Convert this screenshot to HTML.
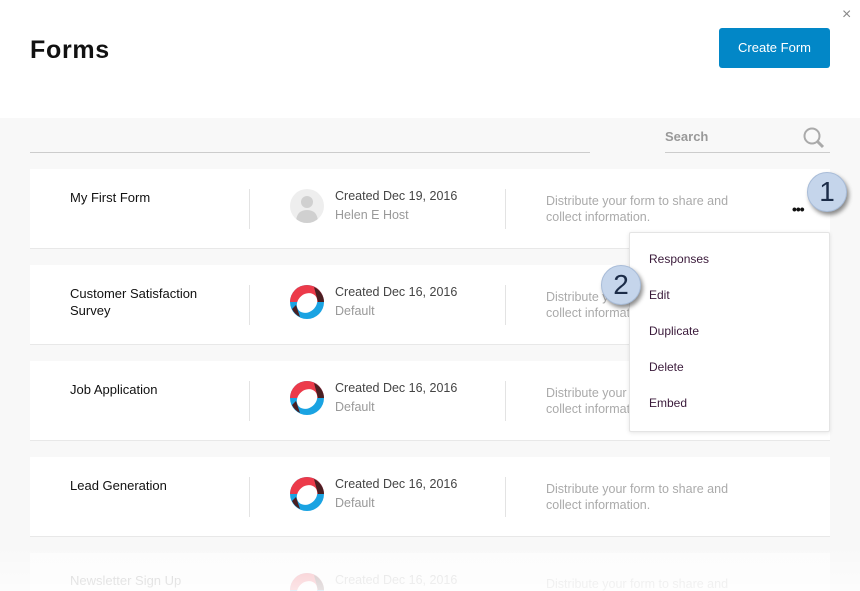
<!DOCTYPE html>
<html style="width:860px;height:591px;overflow:hidden"><head><style>
*{margin:0;padding:0;box-sizing:border-box}
body{width:860px;height:591px;background:#fff;font-family:"Liberation Sans",sans-serif;position:relative;overflow:hidden}
.a{position:absolute}
.gray{left:0;top:118px;width:860px;height:473px;background:#f8f8f8}
.card{left:30px;width:800px;height:80px;background:#fff;border-bottom:1px solid #e8e8e8}
.t{font-size:13px;color:#111;line-height:17px}
.c{font-size:12.5px;color:#444;line-height:19px}
.s{font-size:12.5px;color:#999;line-height:19px}
.d{font-size:12.5px;color:#aaa;line-height:16px}
.v{width:1px;height:40px;background:#e3e3e3}
.m{font-size:12px;color:#3a1a3a;left:649px}
.badge{width:40px;height:40px;border-radius:50%;background:#c5d5eb;border:1px solid #a8bcd8;box-shadow:2px 3px 4px rgba(0,0,0,.45);font-size:28px;color:#1c2c48;text-align:center;line-height:38px}
</style></head><body>
<div class="a" style="left:30px;top:36px;font-size:25px;font-weight:bold;color:#111;letter-spacing:.7px">Forms</div>
<div class="a" style="left:842px;top:6px;font-size:16px;color:#888">×</div>
<div class="a" style="left:719px;top:28px;width:111px;height:40px;background:#0287c7;border-radius:3px;color:#fff;font-size:13px;text-align:center;line-height:40px">Create Form</div>
<div class="a gray"></div>
<div class="a" style="left:30px;top:152px;width:560px;height:1px;background:#ccc"></div>
<div class="a" style="left:665px;top:129px;font-size:13px;color:#999;font-weight:bold">Search</div>
<svg class="a" style="left:802px;top:126px" width="24" height="24"><circle cx="10" cy="10" r="7.5" fill="none" stroke="#aaa" stroke-width="2"/><line x1="15.5" y1="15.5" x2="21" y2="21" stroke="#aaa" stroke-width="3"/></svg>
<div class="a" style="left:665px;top:152px;width:165px;height:1px;background:#ccc"></div>

<div class="a card" style="top:169px"></div>
<div class="a card" style="top:265px"></div>
<div class="a card" style="top:361px"></div>
<div class="a card" style="top:457px"></div>
<div class="a card" style="top:553px;height:38px;border:none;opacity:.5"></div>

<div class="a t" style="left:70px;top:189px">My First Form</div>
<div class="a v" style="left:249px;top:189px"></div>
<div class="a" style="left:290px;top:189px;width:34px;height:34px;border-radius:50%;background:#eee;overflow:hidden"><svg width="34" height="34"><circle cx="17" cy="13" r="6" fill="#d0d0d0"/><path d="M6 34 Q6 21 17 21 Q28 21 28 34Z" fill="#d0d0d0"/></svg></div>
<div class="a c" style="left:335px;top:187px">Created Dec 19, 2016</div>
<div class="a s" style="left:335px;top:206px">Helen E Host</div>
<div class="a v" style="left:505px;top:189px"></div>
<div class="a d" style="left:546px;top:193px">Distribute your form to share and<br>collect information.</div>
<div class="a" style="left:792px;top:202px;font-size:14px;font-weight:bold;color:#111;letter-spacing:-1px;line-height:14px">•••</div>

<div class="a t" style="left:70px;top:285px">Customer Satisfaction<br>Survey</div>
<div class="a t" style="left:70px;top:381px">Job Application</div>
<div class="a t" style="left:70px;top:477px">Lead Generation</div>
<div class="a" style="left:70px;top:573px;font-size:13px;color:#ccc">Newsletter Sign Up</div>

<div class="a v" style="left:249px;top:285px"></div><div class="a v" style="left:505px;top:285px"></div>
<div class="a v" style="left:249px;top:381px"></div><div class="a v" style="left:505px;top:381px"></div>
<div class="a v" style="left:249px;top:477px"></div><div class="a v" style="left:505px;top:477px"></div>

<svg width="0" height="0" style="position:absolute"><defs><g id="lg"><circle cx="17" cy="17" r="17" fill="#1aa3e2"/><path d="M17 0 A17 17 0 0 0 0 17 L34 17 A17 17 0 0 0 17 0Z" fill="#ec3a4a"/><path d="M24 2 A17 17 0 0 1 34 17 L28 17Z" fill="#4a1f22"/><path d="M2 24 A17 17 0 0 0 10 32 L6 20Z" fill="#4a1f22"/><ellipse cx="17" cy="18" rx="11" ry="9" transform="rotate(-40 17 18)" fill="#fff"/></g></defs></svg>
<svg class="a" style="left:290px;top:285px" width="34" height="34"><use href="#lg"/></svg>
<svg class="a" style="left:290px;top:381px" width="34" height="34"><use href="#lg"/></svg>
<svg class="a" style="left:290px;top:477px" width="34" height="34"><use href="#lg"/></svg>
<svg class="a" style="left:290px;top:573px;opacity:.3" width="34" height="34"><use href="#lg"/></svg>

<div class="a c" style="left:335px;top:283px">Created Dec 16, 2016</div><div class="a s" style="left:335px;top:302px">Default</div>
<div class="a c" style="left:335px;top:379px">Created Dec 16, 2016</div><div class="a s" style="left:335px;top:398px">Default</div>
<div class="a c" style="left:335px;top:475px">Created Dec 16, 2016</div><div class="a s" style="left:335px;top:494px">Default</div>
<div class="a" style="left:335px;top:573px;font-size:12.5px;color:#ddd">Created Dec 16, 2016</div>

<div class="a d" style="left:546px;top:289px">Distribute your form to share and<br>collect information.</div>
<div class="a d" style="left:546px;top:385px">Distribute your form to share and<br>collect information.</div>
<div class="a d" style="left:546px;top:481px">Distribute your form to share and<br>collect information.</div>
<div class="a" style="left:546px;top:577px;font-size:12.5px;color:#e2e2e2">Distribute your form to share and</div>

<div class="a" style="left:0;top:545px;width:860px;height:46px;background:linear-gradient(rgba(255,255,255,0),rgba(255,255,255,.6))"></div>

<div class="a" style="left:629px;top:232px;width:201px;height:200px;background:#fff;border:1px solid #e4e4e4;border-radius:2px;box-shadow:0 1px 4px rgba(0,0,0,.1)"></div>
<div class="a m" style="top:252px">Responses</div>
<div class="a m" style="top:288px">Edit</div>
<div class="a m" style="top:324px">Duplicate</div>
<div class="a m" style="top:360px">Delete</div>
<div class="a m" style="top:396px">Embed</div>

<div class="a badge" style="left:807px;top:172px">1</div>
<div class="a badge" style="left:601px;top:265px">2</div>
</body></html>
